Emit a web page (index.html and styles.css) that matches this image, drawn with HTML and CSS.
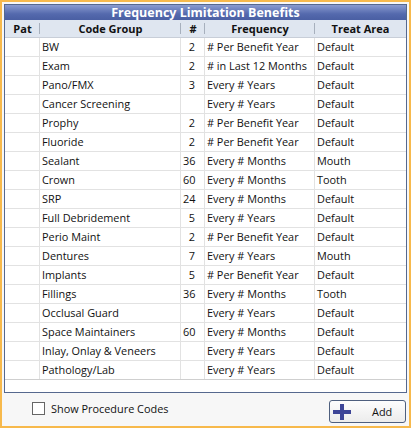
FILE: index.html
```html
<!DOCTYPE html>
<html>
<head>
<meta charset="utf-8">
<link rel="stylesheet" href="styles.css">
</head>
<body>
<div class="frame">
  <div class="grid">
    <div class="title">Frequency Limitation Benefits</div>
    <div class="head">
      <div class="hc">Pat</div>
      <div class="hc">Code Group</div>
      <div class="hc">#</div>
      <div class="hc">Frequency</div>
      <div class="hc last">Treat Area</div>
    </div>
    <div class="rows">
      <div class="row"><div class="c"></div><div class="c">BW</div><div class="c num">2</div><div class="c"># Per Benefit Year</div><div class="c">Default</div></div>
      <div class="row"><div class="c"></div><div class="c">Exam</div><div class="c num">2</div><div class="c"># in Last 12 Months</div><div class="c">Default</div></div>
      <div class="row"><div class="c"></div><div class="c">Pano/FMX</div><div class="c num">3</div><div class="c">Every # Years</div><div class="c">Default</div></div>
      <div class="row"><div class="c"></div><div class="c">Cancer Screening</div><div class="c num"></div><div class="c">Every # Years</div><div class="c">Default</div></div>
      <div class="row"><div class="c"></div><div class="c">Prophy</div><div class="c num">2</div><div class="c"># Per Benefit Year</div><div class="c">Default</div></div>
      <div class="row"><div class="c"></div><div class="c">Fluoride</div><div class="c num">2</div><div class="c"># Per Benefit Year</div><div class="c">Default</div></div>
      <div class="row"><div class="c"></div><div class="c">Sealant</div><div class="c num">36</div><div class="c">Every # Months</div><div class="c">Mouth</div></div>
      <div class="row"><div class="c"></div><div class="c">Crown</div><div class="c num">60</div><div class="c">Every # Months</div><div class="c">Tooth</div></div>
      <div class="row"><div class="c"></div><div class="c">SRP</div><div class="c num">24</div><div class="c">Every # Months</div><div class="c">Default</div></div>
      <div class="row"><div class="c"></div><div class="c">Full Debridement</div><div class="c num">5</div><div class="c">Every # Years</div><div class="c">Default</div></div>
      <div class="row"><div class="c"></div><div class="c">Perio Maint</div><div class="c num">2</div><div class="c"># Per Benefit Year</div><div class="c">Default</div></div>
      <div class="row"><div class="c"></div><div class="c">Dentures</div><div class="c num">7</div><div class="c">Every # Years</div><div class="c">Mouth</div></div>
      <div class="row"><div class="c"></div><div class="c">Implants</div><div class="c num">5</div><div class="c"># Per Benefit Year</div><div class="c">Default</div></div>
      <div class="row"><div class="c"></div><div class="c">Fillings</div><div class="c num">36</div><div class="c">Every # Months</div><div class="c">Tooth</div></div>
      <div class="row"><div class="c"></div><div class="c">Occlusal Guard</div><div class="c num"></div><div class="c">Every # Years</div><div class="c">Default</div></div>
      <div class="row"><div class="c"></div><div class="c">Space Maintainers</div><div class="c num">60</div><div class="c">Every # Months</div><div class="c">Default</div></div>
      <div class="row"><div class="c"></div><div class="c">Inlay, Onlay &amp; Veneers</div><div class="c num"></div><div class="c">Every # Years</div><div class="c">Default</div></div>
      <div class="row"><div class="c"></div><div class="c">Pathology/Lab</div><div class="c num"></div><div class="c">Every # Years</div><div class="c">Default</div></div>
    </div>
  </div>
  <div class="footer">
    <label class="check"><span class="box"></span><span>Show Procedure Codes</span></label>
    <button class="add">
      <svg class="plus" width="18" height="16" viewBox="0 0 18 16"><rect x="0" y="6" width="18" height="4" fill="#3d4597"/><rect x="7" y="0" width="4" height="16" fill="#3d4597"/></svg>
      <span class="add-label">Add</span>
    </button>
  </div>
</div>
</body>
</html>
```
FILE: styles.css
```css
html, body {
  margin: 0;
  padding: 0;
}
body {
  width: 411px;
  height: 428px;
  font-family: "Open Sans", "Noto Sans", sans-serif;
  font-size: 10.9px;
  color: #111;
}
.frame {
  box-sizing: border-box;
  width: 411px;
  height: 428px;
  border: 2px solid #f7b94c;
  padding: 2px;
  background: #f7f7f7;
  display: flex;
  flex-direction: column;
}
.grid {
  box-sizing: border-box;
  height: 389px;
  border: 1px solid #56688e;
  background: #fff;
  display: flex;
  flex-direction: column;
}
.title {
  height: 15px;
  line-height: 15px;
  background: linear-gradient(#8a9bd0, #5469ad 60%, #4a5fa3);
  color: #fff;
  font-weight: bold;
  font-size: 12.5px;
  text-align: center;
}
.head {
  box-sizing: border-box;
  height: 18px;
  display: grid;
  grid-template-columns: 35px 141px 24px 110px 1fr;
  background: #dfe6f0;
  border-bottom: 1px solid #c8ced8;
}
.hc {
  position: relative;
  text-align: center;
  font-weight: bold;
  font-size: 11px;
  line-height: 17px;
}
.hc::after {
  content: "";
  position: absolute;
  right: 0;
  top: 3px;
  bottom: 3px;
  width: 1px;
  background: #a7b0bd;
}
.hc.last::after {
  display: none;
}
.rows {
  flex: 1;
}
.row {
  box-sizing: border-box;
  height: 19px;
  display: grid;
  grid-template-columns: 35px 141px 24px 110px 1fr;
  border-bottom: 1px solid #e2e2e2;
}
.row:last-child {
  border-bottom-color: #cfcfcf;
}
.c {
  box-sizing: border-box;
  border-right: 1px solid #e2e2e2;
  padding-left: 2px;
  line-height: 18px;
  white-space: nowrap;
  overflow: hidden;
}
.c:last-child {
  border-right: 0;
}
.c.num {
  text-align: right;
  padding-right: 9px;
}
.footer {
  flex: 1;
  display: flex;
  align-items: flex-start;
  justify-content: space-between;
  padding: 7px 1px 0 28px;
}
.check {
  display: flex;
  align-items: center;
  gap: 6px;
  margin-top: 1px;
}
.box {
  box-sizing: border-box;
  width: 13px;
  height: 13px;
  border: 1px solid #666;
  background: #fff;
}
.add {
  box-sizing: border-box;
  width: 77px;
  height: 23px;
  border: 1px solid #4e5f7e;
  border-radius: 3px;
  background: linear-gradient(#fdfdfd, #ececec);
  display: flex;
  align-items: center;
  padding: 0 0 0 3px;
  font-family: inherit;
  font-size: 10.9px;
  color: #111;
}
.plus {
  display: block;
}
.add-label {
  margin-left: 21px;
}
```
